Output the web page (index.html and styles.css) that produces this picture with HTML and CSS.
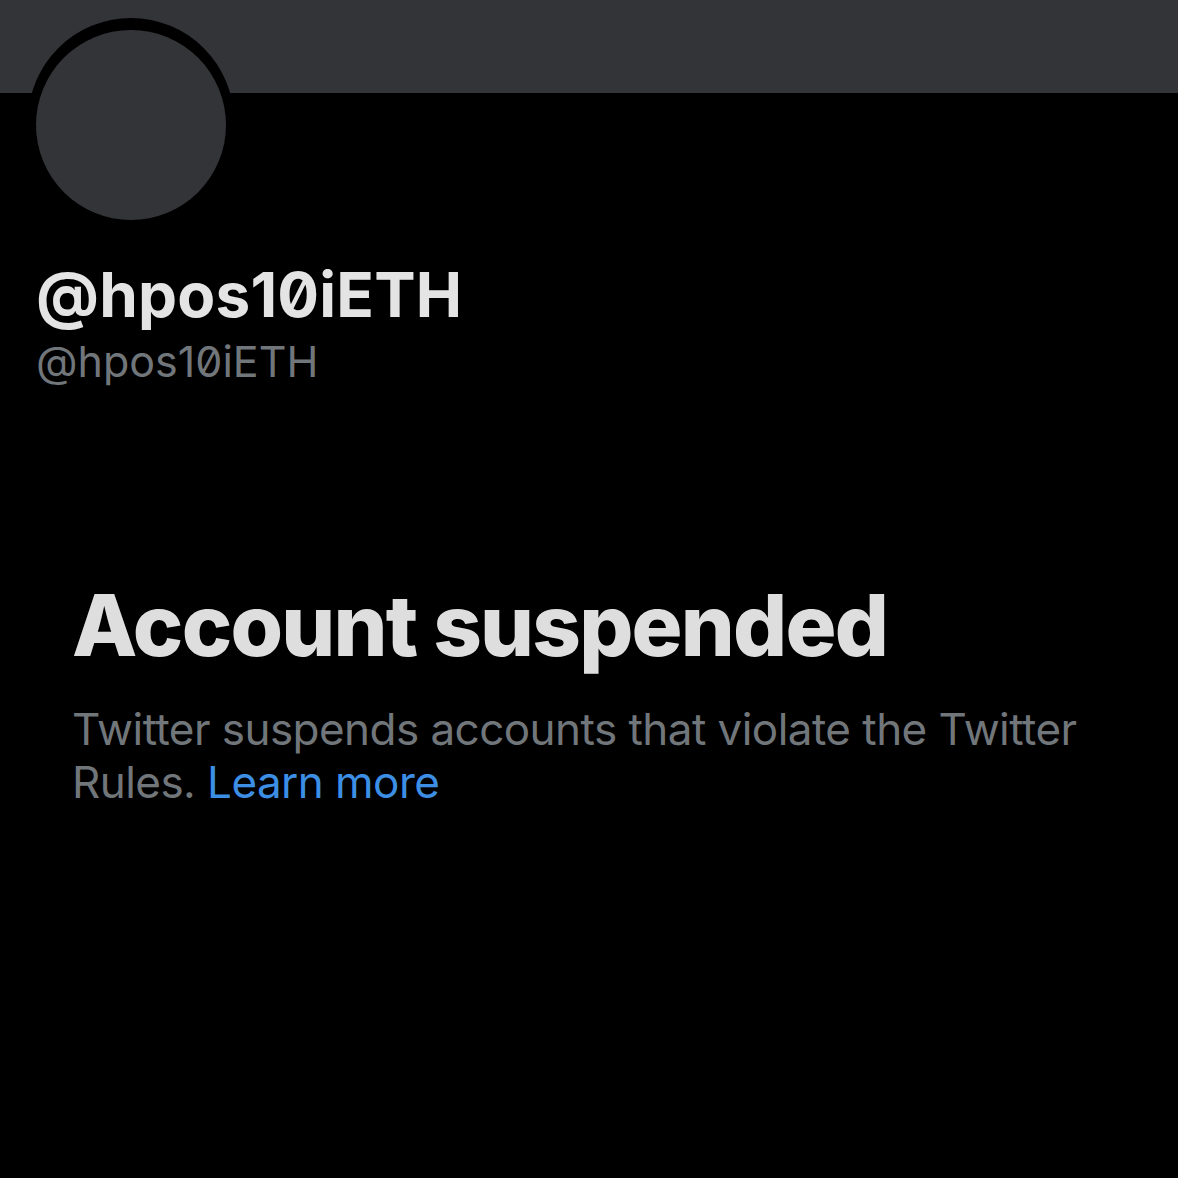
FILE: index.html
```html
<!DOCTYPE html>
<html>
<head>
<meta charset="utf-8">
<link rel="stylesheet" href="styles.css">
</head>
<body>
<div class="page">
  <div class="banner"></div>
  <div class="profile">
    <div class="avatar-ring"><div class="avatar"></div></div>
    <div class="name">@hpos10iETH</div>
    <div class="handle">@hpos10iETH</div>
  </div>
  <div class="suspended">
    <h1 class="title">Account suspended</h1>
    <p class="desc">Twitter suspends accounts that violate the Twitter Rules. <a class="link" href="#">Learn more</a></p>
  </div>
</div>
</body>
</html>
```
FILE: styles.css
```css
html, body {
  margin: 0;
  padding: 0;
  background: #000;
}
.page {
  width: 1178px;
  height: 1178px;
  background: #000;
  font-family: Inter, "Noto Sans", sans-serif;
  overflow: hidden;
}
.banner {
  height: 93px;
  background: #333438;
}
.profile {
  padding-left: 28px;
}
.avatar-ring {
  width: 206px;
  height: 206px;
  margin-top: -75px;
  border-radius: 50%;
  background: #000;
  box-sizing: border-box;
  padding-top: 12px;
  padding-left: 8px;
}
.avatar {
  width: 190px;
  height: 190px;
  border-radius: 50%;
  background: #333438;
}
.name {
  margin-top: 31px;
  padding-left: 8px;
  font-size: 62px;
  font-weight: 700;
  color: #e4e4e4;
  line-height: 80px;
  font-variant-numeric: slashed-zero;
  letter-spacing: 0.2px;
}
.handle {
  padding-left: 8px;
  font-size: 43px;
  font-weight: 400;
  color: #71767b;
  line-height: 52px;
  font-variant-numeric: slashed-zero;
}
.suspended {
  padding: 0 72px;
  margin-top: 189px;
}
.title {
  margin: 0;
  font-size: 85px;
  font-weight: 800;
  color: #dedede;
  line-height: 100px;
  letter-spacing: -1.8px;
}
.desc {
  margin: 27px 0 0;
  font-size: 44px;
  line-height: 53px;
  color: #71767b;
  letter-spacing: -0.55px;
}
.link {
  color: #3c8fe4;
  text-decoration: none;
}
```
